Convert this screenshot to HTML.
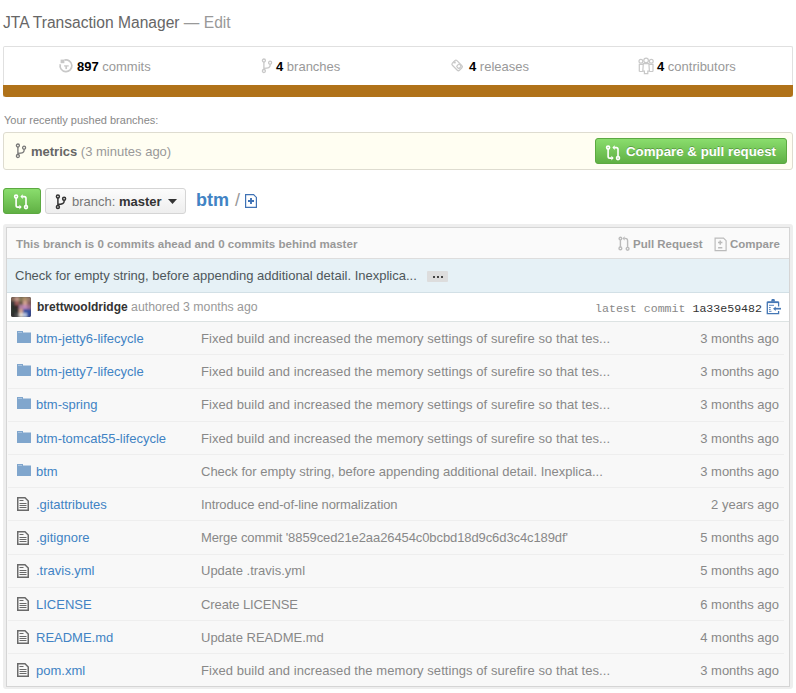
<!DOCTYPE html>
<html><head><meta charset="utf-8">
<style>
*{box-sizing:border-box;margin:0;padding:0}
html,body{width:796px;height:693px;overflow:hidden;background:#fff}
body{font-family:"Liberation Sans",sans-serif;color:#333;position:relative}
.abs,svg.ic,.rt,.sep{position:absolute}
.nw{white-space:nowrap}
.title{left:3px;top:13px;font-size:15.6px;line-height:20px;color:#666;white-space:nowrap}
.title span{color:#999}
.stats{left:3px;top:46px;width:790px;height:51px;border:1px solid #ddd;border-bottom:none;border-radius:2px 2px 0 0;border-color:#e0e0e0}
.bar{left:3px;top:85px;width:790px;height:12px;background:#b07219;border-radius:0 0 3px 3px}
.stat{position:absolute;top:1px;height:38px;line-height:38px;font-size:13px;color:#999;white-space:nowrap}
.stat b{color:#000}
.stat svg{position:absolute}
.pushed-label{left:4px;top:113px;font-size:11px;line-height:14px;color:#888}
.yellow{left:3px;top:132px;width:790px;height:38px;background:#fffef2;border:1px solid #dedcd0;border-radius:3px}
.yellow .br{position:absolute;left:27px;top:10px;font-size:13px;line-height:18px;color:#999;white-space:nowrap}
.yellow .br b{color:#666}
.btn-green{background:#60b044;background-image:linear-gradient(#8add6d,#60b044);border:1px solid #5ca941;border-radius:3px;color:#fff;text-shadow:0 -1px 0 rgba(0,0,0,.25)}
.cpr{left:595px;top:138px;width:192px;height:26px;font-size:13.3px;font-weight:bold;line-height:24px;white-space:nowrap}
.cpr span{position:absolute;left:30px;top:1px}
.cmp{left:3px;top:188px;width:38px;height:26px}
.branchsel{left:45px;top:188px;width:141px;height:26px;border:1px solid #d5d5d5;border-radius:3px;background:linear-gradient(#fcfcfc,#eee);font-size:13px;line-height:24px;color:#777;white-space:nowrap}
.branchsel span{position:absolute;left:26px;top:1px}
.branchsel b{color:#333}
.crumb{left:196px;top:187px;font-size:18px;line-height:26px;font-weight:bold;color:#4183c4;white-space:nowrap}
.slash{left:235px;top:188px;font-size:18px;line-height:24px;color:#999}
.frame{left:3px;top:224px;width:790px;height:465px;background:#eee;border-radius:3px}
.tbl{left:6px;top:227px;width:784px;height:460px;border:1px solid #d5d5d5;background:#f8f8f8}
.hdr{left:7px;top:228px;width:782px;height:31px;background:#fafafa;border-bottom:1px solid #ddd}
.hdr .t{position:absolute;left:9px;top:9px;font-size:11.55px;font-weight:bold;color:#999;line-height:14px;white-space:nowrap}
.hdr .r{position:absolute;top:9px;font-size:11.5px;font-weight:bold;color:#999;line-height:14px;white-space:nowrap}
.msg{left:7px;top:259px;width:782px;height:34px;background:#e6f1f6;border-bottom:1px solid #d2e0e6}
.msg .t{position:absolute;left:8px;top:8px;font-size:13px;line-height:18px;color:#4e575b;white-space:nowrap}
.msg .dots{position:absolute;left:420px;top:12px;width:21px;height:11px;background:#dddddd;border-radius:1px}
.msg .dots i{position:absolute;top:5px;width:2.2px;height:2.2px;background:#444}
.auth{left:7px;top:293px;width:782px;height:29px;background:#fff;border-bottom:1px solid #dde3e3}
.avatar{position:absolute;left:4px;top:4px;width:20px;height:20px;border-radius:2px;overflow:hidden;background:#5a4a3a}
.auth .t{position:absolute;left:30px;top:5px;font-size:12.3px;line-height:18px;color:#999;white-space:nowrap}
.auth .t b{color:#333;font-size:12px}
.auth .sha{position:absolute;right:27px;top:8px;font-family:"Liberation Mono",monospace;font-size:11.6px;line-height:16px;color:#888;white-space:nowrap}
.auth .sha b{font-weight:normal;color:#333}
.sep{left:8px;width:776px;height:1px;background:#eee}
.rt{font-size:13px;line-height:18px;white-space:nowrap}
.rt.n{left:36px;color:#4183c4}
.rt.m{left:201px;color:#888}
.rt.a{right:17px;color:#888}
</style></head><body>
<div class="abs title">JTA Transaction Manager <span>— Edit</span></div>

<div class="abs stats">
  <div class="stat" style="left:55px"><svg width="16" height="16" viewBox="0 0 16 16" style="left:-1px;top:10px"><path d="M6.4 2.1 A5.9 5.9 0 1 1 2.3 6.2" fill="none" stroke="#c8c8c8" stroke-width="1.7"/><path d="M2.6 1.6h3.8v3.6h-3.8z" fill="#c8c8c8"/><path d="M6.1 7.9h4.6" stroke="#c8c8c8" stroke-width="1.3"/><path d="M8.2 7.9v3.2" stroke="#c8c8c8" stroke-width="1.7"/></svg><span style="margin-left:18px"><b>897</b> commits</span></div>
  <div class="stat" style="left:257px"><svg class="abs" style="left:0;top:10px" width="12" height="16" viewBox="0 0 12 16"><g fill="none" stroke="#c8c8c8" stroke-width="1.3"><circle cx="2.9" cy="2.5" r="1.5"/><circle cx="9.1" cy="4.7" r="1.5"/><circle cx="2.9" cy="13" r="1.5"/><path d="M2.9 4v7.5M9.1 6.2v1.2C9.1 9.6 7.5 10.3 2.9 10.3"/></g></svg><span style="margin-left:15px"><b>4</b> branches</span></div>
  <div class="stat" style="left:447px"><svg width="24" height="24" viewBox="0 0 24 24" style="left:-5px;top:5px"><g fill="none" stroke="#c8c8c8" stroke-width="1.2"><rect x="6.15" y="9.2" width="10" height="6.5" rx="1.5" transform="rotate(45 11.15 12.45)"/><rect x="7.4" y="8.4" width="2.3" height="2" fill="#c8c8c8" stroke="none"/><rect x="11.2" y="11.5" width="3.4" height="3.6" rx="0.8" transform="rotate(45 12.9 13.3)"/></g></svg><span style="margin-left:18px"><b>4</b> releases</span></div>
  <div class="stat" style="left:635px"><svg width="24" height="24" viewBox="0 0 24 24" style="left:-5px;top:5px"><g fill="none" stroke="#c8c8c8" stroke-width="1.2"><circle cx="6.9" cy="8.2" r="1.9"/><circle cx="17.3" cy="8.2" r="1.9"/><path d="M5.3 18.5V11.4h4M19 18.5V11.4h-4.2"/><path d="M5.3 18.5h3.5M19 18.5h-3.5"/><circle cx="12.1" cy="7.4" r="2.3" fill="#fff"/><path d="M9.3 10.6h5.6l0.5 7.5h-1.6v2.6h-3.4v-2.6H8.8z" fill="#fff"/></g></svg><span style="margin-left:18px"><b>4</b> contributors</span></div>
</div>
<div class="abs bar"></div>

<div class="abs pushed-label">Your recently pushed branches:</div>
<div class="abs yellow">
  <svg class="abs" style="left:11px;top:10px" width="12" height="16" viewBox="0 0 12 16"><g fill="none" stroke="#777" stroke-width="1.3"><circle cx="2.9" cy="2.5" r="1.5"/><circle cx="9.1" cy="4.7" r="1.5"/><circle cx="2.9" cy="13" r="1.5"/><path d="M2.9 4v7.5M9.1 6.2v1.2C9.1 9.6 7.5 10.3 2.9 10.3"/></g></svg>
  <div class="br"><b>metrics</b> (3 minutes ago)</div>
</div>
<div class="abs btn-green cpr">
  <svg class="abs" style="left:9px;top:5px" width="16" height="17" viewBox="0 0 16 17"><g fill="none" stroke="#fff" stroke-width="1.6"><circle cx="3.1" cy="3.6" r="1.5"/><circle cx="13" cy="14.1" r="1.5"/><path d="M3.1 5.1V12.4Q3.1 14.1 4.8 14.1H6.8M13 12.6V5.3Q13 3.6 11.3 3.6H9.3"/></g><path d="M6.4 11.8L8.7 14.1L6.4 16.4ZM9.7 1.3L7.4 3.6L9.7 5.9Z" fill="#fff"/></svg>
  <span>Compare &amp; pull request</span>
</div>

<div class="abs btn-green cmp">
  <svg class="abs" style="left:9px;top:4px" width="16" height="17" viewBox="0 0 16 17"><g fill="none" stroke="#fff" stroke-width="1.6"><circle cx="3.1" cy="3.6" r="1.5"/><circle cx="13" cy="14.1" r="1.5"/><path d="M3.1 5.1V12.4Q3.1 14.1 4.8 14.1H6.8M13 12.6V5.3Q13 3.6 11.3 3.6H9.3"/></g><path d="M6.4 11.8L8.7 14.1L6.4 16.4ZM9.7 1.3L7.4 3.6L9.7 5.9Z" fill="#fff"/></svg>
</div>
<div class="abs branchsel">
  <svg class="abs" style="left:9px;top:5px" width="12" height="16" viewBox="0 0 12 16"><g fill="none" stroke="#333" stroke-width="1.5"><circle cx="2.9" cy="2.5" r="1.5"/><circle cx="9.1" cy="4.7" r="1.5"/><circle cx="2.9" cy="13" r="1.5"/><path d="M2.9 4v7.5M9.1 6.2v1.2C9.1 9.6 7.5 10.3 2.9 10.3"/></g></svg>
  <span>branch: <b>master</b></span>
  <svg class="abs" style="left:122px;top:10px" width="9" height="5" viewBox="0 0 9 5"><path d="M0 0h9L4.5 5z" fill="#333"/></svg>
</div>
<div class="abs crumb">btm</div>
<div class="abs slash">/</div>
<svg class="abs" style="left:245px;top:194px" width="12" height="14" viewBox="0 0 12 14"><path d="M0.6 0.6H8.6L11.4 3.4V13.4H0.6Z" fill="none" stroke="#3f72b5" stroke-width="1.2"/><path d="M3 7H9M6 4V10" stroke="#3f72b5" stroke-width="1.9"/></svg>

<div class="abs frame"></div>
<div class="abs tbl"></div>
<div class="abs hdr">
  <div class="t">This branch is 0 commits ahead and 0 commits behind master</div>
  <svg class="abs" style="left:611px;top:8px" width="12" height="16" viewBox="0 0 12 16"><g fill="none" stroke="#bbb" stroke-width="1.4"><circle cx="2.4" cy="2.6" r="1.3"/><circle cx="2.4" cy="12.4" r="1.4"/><circle cx="9.6" cy="12.8" r="1.4"/><path d="M2.4 3.9V11M9.6 11.4V4.8Q9.6 2.4 7.2 2.4H6.4"/></g><path d="M6.6 0.2L4.4 2.4L6.6 4.6Z" fill="#bbb"/></svg>
  <div class="r" style="left:626px">Pull Request</div>
  <svg class="abs" style="left:707px;top:9px" width="14" height="15" viewBox="0 0 14 15"><path d="M1.1 1.1h8.4l2.6 2.6v9.9H1.1z" fill="none" stroke="#bbb" stroke-width="1.2"/><path d="M4 5.6h4.4M6.2 3.4v4.4M4.1 10.8h4.2" stroke="#bbb" stroke-width="1.5"/></svg>
  <div class="r" style="left:723px">Compare</div>
</div>
<div class="abs msg">
  <div class="t">Check for empty string, before appending additional detail. Inexplica...</div>
  <div class="dots"><i style="left:6px"></i><i style="left:10px"></i><i style="left:14px"></i></div>
</div>
<div class="abs auth">
  <div class="avatar"><svg width="20" height="20" viewBox="0 0 20 20" style="display:block"><defs><filter id="bl" x="-10%" y="-10%" width="120%" height="120%"><feGaussianBlur stdDeviation="0.9"/></filter></defs><g filter="url(#bl)"><rect x="-2" y="-2" width="24" height="24" fill="#444"/><rect x="0" y="0" width="4" height="4" fill="#8a6a5a"/><rect x="4" y="0" width="4" height="4" fill="#c09888"/><rect x="8" y="0" width="4" height="4" fill="#8a7a58"/><rect x="12" y="0" width="4" height="4" fill="#b0906a"/><rect x="16" y="0" width="4" height="4" fill="#9a7a6a"/><rect x="0" y="4" width="4" height="4" fill="#3a3a3a"/><rect x="4" y="4" width="4" height="4" fill="#9a5a5a"/><rect x="8" y="4" width="4" height="4" fill="#6a5a48"/><rect x="12" y="4" width="4" height="4" fill="#d0a090"/><rect x="16" y="4" width="4" height="4" fill="#8a6060"/><rect x="0" y="8" width="4" height="4" fill="#2a2e2a"/><rect x="4" y="8" width="4" height="4" fill="#3a2a2a"/><rect x="8" y="8" width="4" height="4" fill="#b080a0"/><rect x="12" y="8" width="4" height="4" fill="#c08ab8"/><rect x="16" y="8" width="4" height="4" fill="#a07090"/><rect x="0" y="12" width="4" height="4" fill="#2a302c"/><rect x="4" y="12" width="4" height="4" fill="#303030"/><rect x="8" y="12" width="4" height="4" fill="#d0a090"/><rect x="12" y="12" width="4" height="4" fill="#3050a0"/><rect x="16" y="12" width="4" height="4" fill="#3050a0"/><rect x="0" y="16" width="4" height="4" fill="#2a2a2a"/><rect x="4" y="16" width="4" height="4" fill="#505050"/><rect x="8" y="16" width="4" height="4" fill="#e0d8d0"/><rect x="12" y="16" width="4" height="4" fill="#b0c0e0"/><rect x="16" y="16" width="4" height="4" fill="#2a48a0"/></g></svg></div>
  <div class="t"><b>brettwooldridge</b> authored 3 months ago</div>
  <div class="sha">latest commit <b>1a33e59482</b></div>
  <svg class="abs" style="left:759px;top:5px" width="16" height="17" viewBox="0 0 16 17"><path d="M12.6 8.4V4.3H1.3V15.7H12.6V13" fill="none" stroke="#4577b5" stroke-width="1.3"/><path d="M1.3 4.2H12.6" stroke="#4577b5" stroke-width="1.8"/><path d="M5 3.5L5.8 1.1H8.4L9.2 3.5Z" fill="#4577b5"/><path d="M3 7.3H8M3 9.5H4.7M3 11.4H4.7M3 13.3H5.5" stroke="#4577b5" stroke-width="0.9"/><path d="M15 10.7H8.8" stroke="#4577b5" stroke-width="1.7"/><path d="M7.1 10.7L9.7 8.5V12.9Z" fill="#4577b5"/></svg>
</div>
<svg class="ic" style="left:17px;top:331px" width="14" height="12" viewBox="0 0 14 12"><path d="M0 0h6v1.5h8V12H0z" fill="#80a6cd"/><path d="M1 1h4v1H1z" fill="#a8c3df"/></svg><div class="rt n" style="top:330px">btm-jetty6-lifecycle</div><div class="rt m" style="top:330px;letter-spacing:0.062px">Fixed build and increased the memory settings of surefire so that tes...</div><div class="rt a" style="top:330px">3 months ago</div>
<div class="sep" style="top:354px"></div>
<svg class="ic" style="left:17px;top:364px" width="14" height="12" viewBox="0 0 14 12"><path d="M0 0h6v1.5h8V12H0z" fill="#80a6cd"/><path d="M1 1h4v1H1z" fill="#a8c3df"/></svg><div class="rt n" style="top:363px">btm-jetty7-lifecycle</div><div class="rt m" style="top:363px;letter-spacing:0.062px">Fixed build and increased the memory settings of surefire so that tes...</div><div class="rt a" style="top:363px">3 months ago</div>
<div class="sep" style="top:388px"></div>
<svg class="ic" style="left:17px;top:397px" width="14" height="12" viewBox="0 0 14 12"><path d="M0 0h6v1.5h8V12H0z" fill="#80a6cd"/><path d="M1 1h4v1H1z" fill="#a8c3df"/></svg><div class="rt n" style="top:396px">btm-spring</div><div class="rt m" style="top:396px;letter-spacing:0.062px">Fixed build and increased the memory settings of surefire so that tes...</div><div class="rt a" style="top:396px">3 months ago</div>
<div class="sep" style="top:421px"></div>
<svg class="ic" style="left:17px;top:431px" width="14" height="12" viewBox="0 0 14 12"><path d="M0 0h6v1.5h8V12H0z" fill="#80a6cd"/><path d="M1 1h4v1H1z" fill="#a8c3df"/></svg><div class="rt n" style="top:430px">btm-tomcat55-lifecycle</div><div class="rt m" style="top:430px;letter-spacing:0.062px">Fixed build and increased the memory settings of surefire so that tes...</div><div class="rt a" style="top:430px">3 months ago</div>
<div class="sep" style="top:454px"></div>
<svg class="ic" style="left:17px;top:464px" width="14" height="12" viewBox="0 0 14 12"><path d="M0 0h6v1.5h8V12H0z" fill="#80a6cd"/><path d="M1 1h4v1H1z" fill="#a8c3df"/></svg><div class="rt n" style="top:463px">btm</div><div class="rt m" style="top:463px">Check for empty string, before appending additional detail. Inexplica...</div><div class="rt a" style="top:463px">3 months ago</div>
<div class="sep" style="top:487px"></div>
<svg class="ic" style="left:17px;top:497px" width="12" height="14" viewBox="0 0 12 14"><path d="M0.75 0.75H8L11.25 4V13.25H0.75Z" fill="none" stroke="#6a6a6a" stroke-width="1.5"/><path d="M2.5 3.5H6.5M2.5 6.5H9.5M2.5 8.5H9.5M2.5 10.5H9.5" stroke="#6a6a6a" stroke-width="1"/></svg><div class="rt n" style="top:496px">.gitattributes</div><div class="rt m" style="top:496px;letter-spacing:-0.105px">Introduce end-of-line normalization</div><div class="rt a" style="top:496px">2 years ago</div>
<div class="sep" style="top:520px"></div>
<svg class="ic" style="left:17px;top:531px" width="12" height="14" viewBox="0 0 12 14"><path d="M0.75 0.75H8L11.25 4V13.25H0.75Z" fill="none" stroke="#6a6a6a" stroke-width="1.5"/><path d="M2.5 3.5H6.5M2.5 6.5H9.5M2.5 8.5H9.5M2.5 10.5H9.5" stroke="#6a6a6a" stroke-width="1"/></svg><div class="rt n" style="top:529px">.gitignore</div><div class="rt m" style="top:529px;letter-spacing:-0.095px">Merge commit '8859ced21e2aa26454c0bcbd18d9c6d3c4c189df'</div><div class="rt a" style="top:529px">5 months ago</div>
<div class="sep" style="top:554px"></div>
<svg class="ic" style="left:17px;top:564px" width="12" height="14" viewBox="0 0 12 14"><path d="M0.75 0.75H8L11.25 4V13.25H0.75Z" fill="none" stroke="#6a6a6a" stroke-width="1.5"/><path d="M2.5 3.5H6.5M2.5 6.5H9.5M2.5 8.5H9.5M2.5 10.5H9.5" stroke="#6a6a6a" stroke-width="1"/></svg><div class="rt n" style="top:562px">.travis.yml</div><div class="rt m" style="top:562px">Update .travis.yml</div><div class="rt a" style="top:562px">5 months ago</div>
<div class="sep" style="top:587px"></div>
<svg class="ic" style="left:17px;top:597px" width="12" height="14" viewBox="0 0 12 14"><path d="M0.75 0.75H8L11.25 4V13.25H0.75Z" fill="none" stroke="#6a6a6a" stroke-width="1.5"/><path d="M2.5 3.5H6.5M2.5 6.5H9.5M2.5 8.5H9.5M2.5 10.5H9.5" stroke="#6a6a6a" stroke-width="1"/></svg><div class="rt n" style="top:596px">LICENSE</div><div class="rt m" style="top:596px;letter-spacing:-0.1px">Create LICENSE</div><div class="rt a" style="top:596px">6 months ago</div>
<div class="sep" style="top:620px"></div>
<svg class="ic" style="left:17px;top:630px" width="12" height="14" viewBox="0 0 12 14"><path d="M0.75 0.75H8L11.25 4V13.25H0.75Z" fill="none" stroke="#6a6a6a" stroke-width="1.5"/><path d="M2.5 3.5H6.5M2.5 6.5H9.5M2.5 8.5H9.5M2.5 10.5H9.5" stroke="#6a6a6a" stroke-width="1"/></svg><div class="rt n" style="top:629px">README.md</div><div class="rt m" style="top:629px">Update README.md</div><div class="rt a" style="top:629px">4 months ago</div>
<div class="sep" style="top:653px"></div>
<svg class="ic" style="left:17px;top:663px" width="12" height="14" viewBox="0 0 12 14"><path d="M0.75 0.75H8L11.25 4V13.25H0.75Z" fill="none" stroke="#6a6a6a" stroke-width="1.5"/><path d="M2.5 3.5H6.5M2.5 6.5H9.5M2.5 8.5H9.5M2.5 10.5H9.5" stroke="#6a6a6a" stroke-width="1"/></svg><div class="rt n" style="top:662px">pom.xml</div><div class="rt m" style="top:662px;letter-spacing:0.062px">Fixed build and increased the memory settings of surefire so that tes...</div><div class="rt a" style="top:662px">3 months ago</div>
</body></html>
